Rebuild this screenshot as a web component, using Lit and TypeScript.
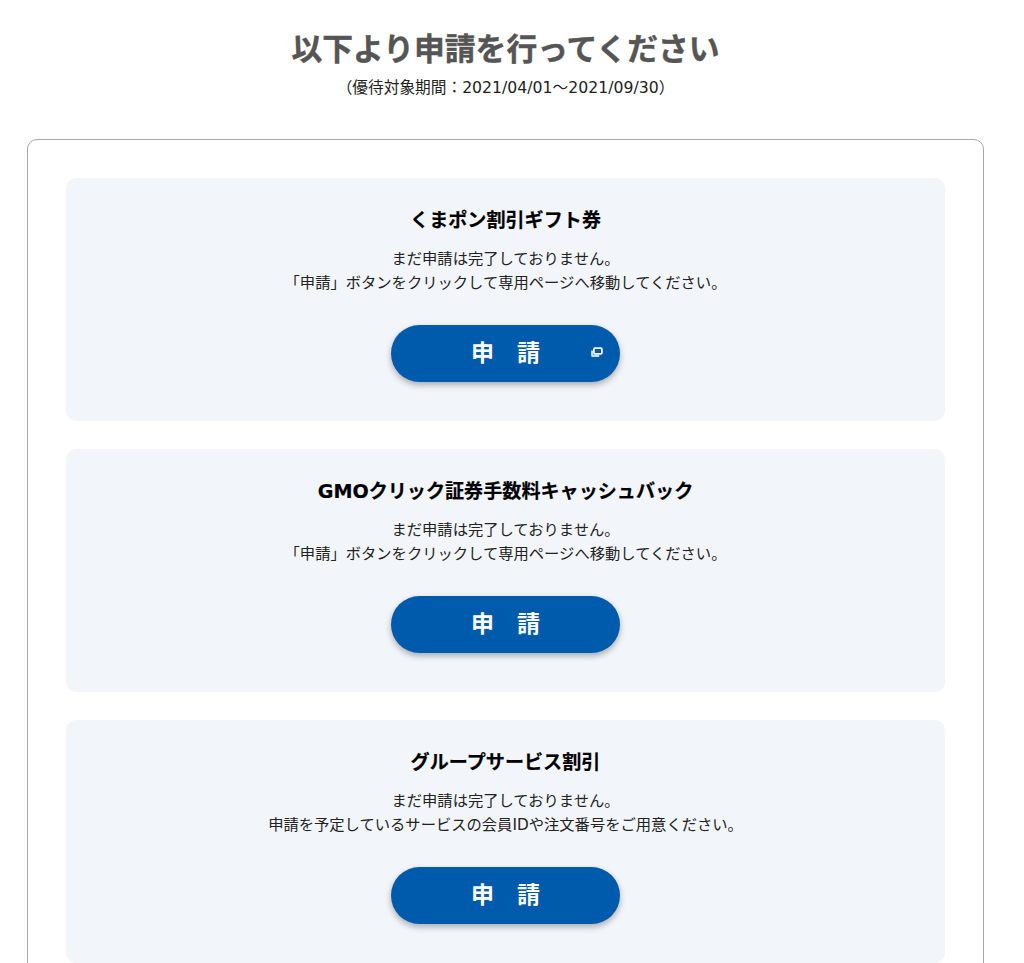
import { LitElement, html, css, svg } from "lit";
import { customElement } from "lit/decorators.js";

const PENDING = "まだ申請は完了しておりません。";
const CARDS = [
  { title: "くまポン割引ギフト券", note: "「申請」ボタンをクリックして専用ページへ移動してください。", ext: true },
  { title: "GMOクリック証券手数料キャッシュバック", note: "「申請」ボタンをクリックして専用ページへ移動してください。", ext: false },
  { title: "グループサービス割引", note: "申請を予定しているサービスの会員IDや注文番号をご用意ください。", ext: false },
];

@customElement("app-root")
export class AppRoot extends LitElement {
  static styles = css`
    :host {
      display: block;
      height: 963px;
      overflow: hidden;
      background: #fff;
      font-family: "DejaVu Sans", "Noto Sans CJK JP", sans-serif;
      color: #222;
    }
    .head {
      display: flex;
      flex-direction: column;
      align-items: center;
      padding: 27px 13px 0 0;
    }
    h1 {
      margin: 0;
      font-size: 30.8px;
      line-height: 44px;
      font-weight: 700;
      color: #555;
      white-space: nowrap;
      -webkit-text-stroke: 0.4px #555;
    }
    .period {
      margin: 6px 0 0;
      font-size: 15.7px;
      line-height: 22px;
      color: #222;
      white-space: nowrap;
    }
    .panel {
      margin: 40px 40px 0 27px;
      padding: 38px 38px;
      border: 1px solid #a8a8a8;
      border-radius: 10px;
      display: flex;
      flex-direction: column;
      gap: 28px;
    }
    .card {
      background: #f2f5fa;
      border-radius: 10px;
      height: 243px;
      box-sizing: border-box;
      padding-top: 28px;
      display: flex;
      flex-direction: column;
      align-items: center;
      flex: none;
    }
    h2 {
      margin: 0;
      font-size: 19.1px;
      line-height: 30px;
      font-weight: 700;
      color: #000;
      white-space: nowrap;
      -webkit-text-stroke: 0.2px #000;
    }
    .msg {
      margin: 11px 0 0;
      font-size: 15.3px;
      line-height: 24px;
      text-align: center;
      color: #222;
      white-space: nowrap;
    }
    .btn {
      margin-top: 30px;
      position: relative;
      box-sizing: border-box;
      width: 229px;
      height: 57px;
      padding: 0 0 6px;
      border-radius: 29px;
      background: #005bac;
      box-shadow: 0 3px 6px rgba(0, 0, 0, 0.3);
      color: #fff;
      font-size: 23px;
      font-weight: 700;
      display: flex;
      align-items: center;
      justify-content: center;
    }
    .ext {
      position: absolute;
      right: 17px;
      top: 22px;
      width: 13px;
      height: 11px;
    }
  `;

  private extIcon() {
    return html`<svg class="ext" viewBox="0 0 12 10" aria-hidden="true">
      ${svg`<rect x="3.6" y="0.9" width="7.4" height="5.4" rx="1" fill="none" stroke="#fff" stroke-width="1.6"/>
      <path d="M1 3.2h2v3.9h5.5v2H2a1 1 0 0 1-1-1z" fill="#cfe0f2"/>`}
    </svg>`;
  }

  render() {
    return html`
      <div class="head">
        <h1>以下より申請を行ってください</h1>
        <p class="period">（優待対象期間：2021/04/01～2021/09/30）</p>
      </div>
      <div class="panel">
        ${CARDS.map(
          (c) => html`<section class="card">
            <h2>${c.title}</h2>
            <p class="msg">${PENDING}<br />${c.note}</p>
            <div class="btn">申　請${c.ext ? this.extIcon() : ""}</div>
          </section>`
        )}
      </div>
    `;
  }
}
